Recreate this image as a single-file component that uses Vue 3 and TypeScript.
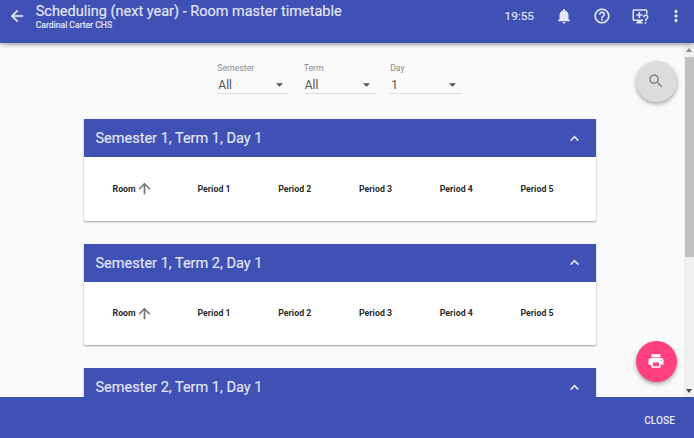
<script setup lang="ts">
import { ref } from 'vue'

interface Filter {
  label: string
  value: string
}

const filters: Filter[] = [
  { label: 'Semester', value: 'All' },
  { label: 'Term', value: 'All' },
  { label: 'Day', value: '1' },
]

const panels = ref([
  { title: 'Semester 1, Term 1, Day 1', loaded: true },
  { title: 'Semester 1, Term 2, Day 1', loaded: true },
  { title: 'Semester 2, Term 1, Day 1', loaded: false },
])

const periods: number[] = [1, 2, 3, 4, 5]
</script>

<template>
  <div class="screen">
    <header class="toolbar">
      <button class="icon-button back" aria-label="Back">
        <svg viewBox="0 0 24 24"><path d="M20 11H7.83l5.59-5.59L12 4l-8 8 8 8 1.41-1.41L7.83 13H20v-2z" /></svg>
      </button>
      <div class="heading">
        <h1>Scheduling (next year) - Room master timetable</h1>
        <p>Cardinal Carter CHS</p>
      </div>
      <div class="actions">
        <span class="clock">19:55</span>
        <button class="icon-button bell" aria-label="Notifications">
          <svg viewBox="0 0 24 24"><path d="M12 22c1.1 0 2-.9 2-2h-4c0 1.1.89 2 2 2zm6-6v-5c0-3.07-1.64-5.64-4.5-6.32V4c0-.83-.67-1.5-1.5-1.5s-1.5.67-1.5 1.5v.68C7.63 5.36 6 7.92 6 11v5l-2 2v1h16v-1l-2-2z" /></svg>
        </button>
        <button class="icon-button help" aria-label="Help">
          <svg viewBox="0 0 24 24"><path d="M11 18h2v-2h-2v2zm1-16C6.48 2 2 6.48 2 12s4.48 10 10 10 10-4.48 10-10S17.52 2 12 2zm0 18c-4.41 0-8-3.59-8-8s3.59-8 8-8 8 3.59 8 8-3.59 8-8 8zm0-14c-2.21 0-4 1.79-4 4h2c0-1.1.9-2 2-2s2 .9 2 2c0 2-3 1.75-3 5h2c0-2.25 3-2.5 3-5 0-2.21-1.79-4-4-4z" /></svg>
        </button>
        <button class="icon-button support" aria-label="Remote support">
          <svg viewBox="0 0 24 24">
            <path d="M22 9.500V5a2 2 0 0 0-2-2H4a2 2 0 0 0-2 2v11.500a2 2 0 0 0 2 2h4.500v1L7 20.500V22h8.500v-1.500L14 19.500v-1h2v-2H4V5h16v4.500z" />
            <path d="M10 6.500h2.200v3h3.100v2.200h-3.100v3H10v-3H7V9.500h3z" />
            <path class="stroke" d="M17 13.500c0-1.600 1.200-2.500 2.600-2.500s2.700.9 2.700 2.500c0 2.200-2.900 2.300-2.900 5M19.400 20v2.200" />
          </svg>
        </button>
        <button class="icon-button more" aria-label="More">
          <svg viewBox="0 0 24 24"><path d="M12 8c1.1 0 2-.9 2-2s-.9-2-2-2-2 .9-2 2 .9 2 2 2zm0 2c-1.1 0-2 .9-2 2s.9 2 2 2 2-.9 2-2-.9-2-2-2zm0 6c-1.1 0-2 .9-2 2s.9 2 2 2 2-.9 2-2-.9-2-2-2z" /></svg>
        </button>
      </div>
    </header>

    <div class="body">
      <main class="content">
        <div class="filters">
          <div v-for="f in filters" :key="f.label" class="filter">
            <span class="filter-label">{{ f.label }}</span>
            <div class="filter-value">
              <span>{{ f.value }}</span>
              <svg viewBox="0 0 8 4"><path d="M0 0h8L4 4z" /></svg>
            </div>
          </div>
        </div>

        <section v-for="p in panels" :key="p.title" class="panel">
          <div class="panel-header">
            <h2>{{ p.title }}</h2>
            <svg viewBox="0 0 24 24"><path d="M12 8l-6 6 1.410 1.410L12 10.830l4.590 4.580L18 14z" /></svg>
          </div>
          <div v-if="p.loaded" class="columns">
            <div class="column room">
              <span>Room</span>
              <svg viewBox="0 0 24 24"><path d="M4 12l1.410 1.410L11 7.830V20h2V7.830l5.580 5.590L20 12l-8-8-8 8z" /></svg>
            </div>
            <div v-for="n in periods" :key="n" class="column">Period {{ n }}</div>
          </div>
        </section>
      </main>
      <div class="scrollbar">
        <svg class="arrow up" viewBox="0 0 6 4"><path d="M0 4h6L3 0z" /></svg>
        <div class="thumb"></div>
        <svg class="arrow down" viewBox="0 0 6 4"><path d="M0 0h6L3 4z" /></svg>
      </div>
      <button class="fab search" aria-label="Search">
        <svg viewBox="0 0 24 24"><path d="M15.500 14h-.79l-.28-.27C15.410 12.590 16 11.110 16 9.500 16 5.910 13.090 3 9.500 3S3 5.910 3 9.500 5.910 16 9.500 16c1.610 0 3.090-.59 4.230-1.570l.27.28v.79l5 4.990L20.490 19l-4.990-5zm-6 0C7.010 14 5 11.990 5 9.500S7.010 5 9.500 5 14 7.010 14 9.500 11.990 14 9.500 14z" /></svg>
      </button>
      <button class="fab print" aria-label="Print">
        <svg viewBox="0 0 24 24"><path d="M19 8H5c-1.660 0-3 1.340-3 3v6h4v4h12v-4h4v-6c0-1.660-1.340-3-3-3zm-3 11H8v-5h8v5zm3-7c-.55 0-1-.45-1-1s.45-1 1-1 1 .45 1 1-.45 1-1 1zm-1-9H6v4h12V3z" /></svg>
      </button>
    </div>

    <footer class="footer"><button class="close">CLOSE</button></footer>
  </div>
</template>

<style>
body {
  margin: 0;
  overflow: hidden;
}
</style>

<style scoped>
.screen {
  display: flex;
  flex-direction: column;
  width: 694px;
  height: 438px;
  background: #fafafa;
  font-family: Roboto, "Liberation Sans", sans-serif;
  color: rgba(0, 0, 0, 0.87);
}
button {
  border: 0;
  padding: 0;
  background: none;
  color: inherit;
  font: inherit;
}
h1, h2, p {
  margin: 0;
}
svg {
  display: block;
  flex: none;
  fill: currentColor;
}
.toolbar {
  position: relative;
  z-index: 2;
  display: flex;
  flex: none;
  box-sizing: border-box;
  height: 43px;
  padding-left: 8px;
  background: #3f51b5;
  color: #e4e7f6;
  box-shadow: 0 1px 5px rgba(0, 0, 0, 0.45);
}
.icon-button {
  display: flex;
  align-items: center;
  justify-content: center;
  width: 18px;
  height: 32px;
}
.icon-button svg {
  width: 18px;
  height: 18px;
}
.back svg {
  stroke: currentColor;
  stroke-width: 0.500;
}
.heading {
  margin-left: 9.700px;
}
h1 {
  padding-top: 3px;
  font-size: 14.500px;
  font-weight: 400;
  line-height: 17px;
  white-space: nowrap;
  -webkit-text-stroke: 0.150px currentColor;
}
.heading p {
  font-size: 8.600px;
  line-height: 10px;
  -webkit-text-stroke: 0.200px currentColor;
}
.actions {
  display: flex;
  align-items: center;
  height: 32px;
  margin-left: auto;
  padding-right: 9px;
}
.clock {
  margin-right: 21px;
  font-size: 11.800px;
  -webkit-text-stroke: 0.150px currentColor;
}
.help, .support {
  margin-left: 20px;
}
.help svg {
  stroke: currentColor;
  stroke-width: 0.300;
}
.more {
  margin-left: 18px;
}
.more svg {
  stroke: currentColor;
  stroke-width: 0.400;
}
.stroke {
  fill: none;
  stroke: currentColor;
  stroke-width: 1.900;
}
.body {
  position: relative;
  display: flex;
  flex: 1;
  min-height: 0;
}
.content {
  flex: 1;
  overflow: hidden;
  padding: 19px 88.500px 0 84px;
}
.filters {
  display: flex;
  justify-content: center;
  gap: 14.400px;
  height: 57px;
}
.filter {
  width: 72px;
}
.filter-label {
  display: block;
  font-size: 8.700px;
  line-height: 12px;
  color: #8a8a8a;
}
.filter-value {
  display: flex;
  align-items: center;
  justify-content: space-between;
  box-sizing: border-box;
  height: 20px;
  padding: 2px 6px 0 1px;
  border-bottom: 1px solid #dcdcdc;
  color: #555;
  font-size: 12px;
}
.filter-value svg {
  width: 7px;
  height: 4px;
}
.panel {
  height: 101.700px;
  margin-bottom: 23px;
  border-radius: 0 0 2px 2px;
  background: #fff;
  box-shadow: 0 1px 2px rgba(0, 0, 0, 0.38);
}
.panel-header {
  display: flex;
  align-items: center;
  justify-content: space-between;
  height: 38.300px;
  padding: 0 13px 0 11.500px;
  background: #3f51b5;
  color: #e4e7f6;
}
h2 {
  padding-top: 0.400px;
  font-size: 14.500px;
  font-weight: 400;
  -webkit-text-stroke: 0.150px currentColor;
}
.panel-header svg {
  width: 17px;
  height: 17px;
  stroke: currentColor;
  stroke-width: 0.500;
}
.columns {
  display: grid;
  grid-template-columns: 85px repeat(5, 80.750px);
  align-items: center;
  height: 63px;
  padding-left: 28.500px;
  font-size: 8.800px;
  font-weight: 700;
}
.room {
  display: flex;
  align-items: center;
}
.room svg {
  width: 17px;
  height: 17px;
  color: #757575;
  stroke: currentColor;
  stroke-width: 0.300;
}
.scrollbar {
  position: relative;
  z-index: 1;
  display: flex;
  flex: none;
  flex-direction: column;
  align-items: center;
  width: 10px;
  background: #f0f0f0;
}
.arrow {
  width: 6px;
  height: 4px;
}
.up {
  margin: 5px 0 5px;
  color: #8b8b8b;
}
.thumb {
  width: 9px;
  height: 200px;
  background: #c1c1c1;
}
.down {
  margin-top: auto;
  margin-bottom: 4px;
  color: #444;
}
.fab {
  position: absolute;
  right: 17.500px;
  display: flex;
  align-items: center;
  justify-content: center;
  width: 41px;
  height: 41px;
  border-radius: 50%;
  box-shadow: 0 2px 4px rgba(0, 0, 0, 0.35);
}
.fab svg {
  width: 18px;
  height: 18px;
}
.search {
  top: 18px;
  background: #dcdcdc;
  color: #858585;
}
.search svg {
  margin-top: -2px;
}
.print {
  bottom: 15.500px;
  background: #ff4081;
  color: #fff;
}
.footer {
  position: relative;
  display: flex;
  flex: none;
  align-items: center;
  justify-content: flex-end;
  box-sizing: border-box;
  height: 41px;
  padding: 5px 19px 0 0;
  background: #3f51b5;
  color: #e4e7f6;
}
.close {
  font-size: 10.200px;
  font-weight: 500;
}
</style>
